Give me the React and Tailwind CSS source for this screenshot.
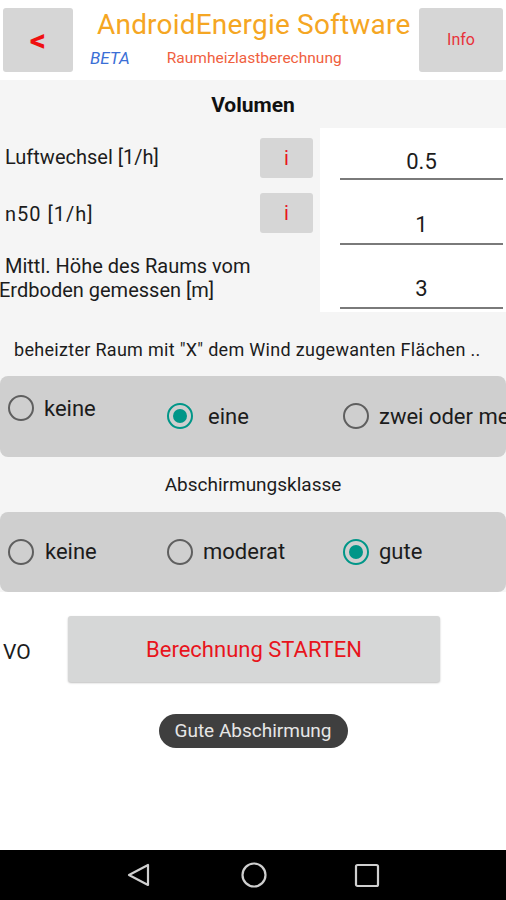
import React from "react";

function Radio({ checked }) {
  return (
    <span
      className={
        "flex h-[26px] w-[26px] shrink-0 items-center justify-center rounded-full border-[2.5px] " +
        (checked ? "border-[#009688]" : "border-[#5f5f5f]")
      }
    >
      {checked ? <span className="h-[14px] w-[14px] rounded-full bg-[#009688]" /> : null}
    </span>
  );
}

function RadioItem({ checked, label, w, pl, gap, dy }) {
  return (
    <div className={"flex items-center overflow-hidden " + w + " " + pl + " " + gap + " " + dy}>
      <Radio checked={checked} />
      <span className="whitespace-nowrap text-[22px] text-[#1c1c1c]">{label}</span>
    </div>
  );
}

export default function App() {
  return (
    <div
      className="flex h-[900px] w-[506px] flex-col overflow-hidden bg-white"
      style={{ fontFamily: "Roboto, 'Noto Sans', sans-serif" }}
    >
      {/* Header */}
      <div className="flex h-[80px] shrink-0 bg-white pt-[8px]">
        <div className="ml-[3px] flex h-[64px] w-[70px] items-center justify-center rounded-[3px] bg-[#d6d6d6]">
          <span className="text-[32px] font-bold leading-none text-[#f01010]">&lt;</span>
        </div>
        <div className="flex flex-1 flex-col">
          <div className="pl-[24px] text-[28px] tracking-[0.2px] leading-[34px] text-[#f5a623]">AndroidEnergie Software</div>
          <div className="mt-[4px] flex items-center">
            <span className="pl-[17px] text-[17px] italic text-[#3b6fd6]">BETA</span>
            <span className="pl-[37px] text-[15.5px] text-[#f0603e]">Raumheizlastberechnung</span>
          </div>
        </div>
        <div className="mr-[3px] flex h-[64px] w-[84px] items-center justify-center rounded-[3px] bg-[#d6d6d6]">
          <span className="text-[16px] text-[#e8323a]">Info</span>
        </div>
      </div>

      {/* Volumen */}
      <div className="flex h-[48px] shrink-0 items-center justify-center bg-[#f5f5f5] pt-[4px]">
        <span className="text-[21px] font-bold text-[#111]">Volumen</span>
      </div>

      {/* Rows */}
      <div className="flex h-[184px] shrink-0">
        <div className="flex w-[320px] flex-col bg-[#f5f5f5]">
          <div className="flex h-[56px] items-start pt-[10px]">
            <span className="w-[260px] pl-[5px] pt-[4px] text-[20px] text-[#1c1c1c]">Luftwechsel [1/h]</span>
            <div className="flex h-[40px] w-[53px] items-center justify-center rounded-[3px] bg-[#d6d6d6]">
              <span className="text-[20px] text-[#e8141c]">i</span>
            </div>
          </div>
          <div className="flex h-[64px] items-start pt-[9px]">
            <span className="w-[260px] pl-[5px] pt-[6px] text-[20px] tracking-[1px] text-[#1c1c1c]">n50 [1/h]</span>
            <div className="flex h-[40px] w-[53px] items-center justify-center rounded-[3px] bg-[#d6d6d6]">
              <span className="text-[20px] text-[#e8141c]">i</span>
            </div>
          </div>
          <div className="flex h-[64px] flex-col justify-center pb-[5px] text-[20px] leading-[24px] text-[#1c1c1c]">
            <span className="pl-[5px] whitespace-nowrap">Mittl. Höhe des Raums vom</span>
            <span className="-ml-[1px] whitespace-nowrap">Erdboden gemessen [m]</span>
          </div>
        </div>
        <div className="flex flex-1 flex-col bg-white pl-[20px] pr-[3px]">
          <div className="flex h-[56px] flex-col justify-end pb-[4px]">
            <div className="flex h-[36px] items-center justify-center border-b-[2px] border-[#7a7a7a] text-[22px] text-[#1c1c1c]">0.5</div>
          </div>
          <div className="flex h-[64px] flex-col justify-end pb-[3px]">
            <div className="flex h-[40px] items-center justify-center border-b-[2px] border-[#7a7a7a] text-[22px] text-[#1c1c1c]">1</div>
          </div>
          <div className="flex h-[64px] flex-col justify-end pb-[3px]">
            <div className="flex h-[40px] items-center justify-center border-b-[2px] border-[#7a7a7a] text-[22px] text-[#1c1c1c]">3</div>
          </div>
        </div>
      </div>

      {/* Wind section */}
      <div className="flex h-[64px] shrink-0 items-center bg-[#f5f5f5] pl-[14px] pt-[10px]">
        <span className="whitespace-nowrap text-[18px] tracking-[0.3px] text-[#1c1c1c]">beheizter Raum mit "X" dem Wind zugewanten Flächen ..</span>
      </div>
      <div className="flex h-[81px] shrink-0 bg-[#f5f5f5]">
        <div className="flex flex-1 overflow-hidden rounded-[8px] bg-[#cfcfcf] pt-[19px]">
          <RadioItem checked={false} label="keine" w="w-[154px]" pl="pl-[8px]" gap="gap-[10px]" dy="h-[26px]" />
          <RadioItem checked={true} label="eine" w="w-[189px]" pl="pl-[13px]" gap="gap-[15px]" dy="h-[26px] mt-[8px]" />
          <RadioItem checked={false} label="zwei oder mehr" w="flex-1" pl="pl-0" gap="gap-[10px]" dy="h-[30px] mt-[6px]" />
        </div>
      </div>

      {/* Abschirmungsklasse */}
      <div className="flex h-[55px] shrink-0 items-center justify-center bg-[#f5f5f5] pt-[2px]">
        <span className="text-[19px] text-[#1c1c1c]">Abschirmungsklasse</span>
      </div>
      <div className="flex h-[80px] shrink-0 bg-[#f5f5f5]">
        <div className="flex flex-1 items-center rounded-[8px] bg-[#cfcfcf] pb-[1px]">
          <RadioItem checked={false} label="keine" w="w-[154px]" pl="pl-[8px]" gap="gap-[11px]" dy="h-[30px]" />
          <RadioItem checked={false} label="moderat" w="w-[189px]" pl="pl-[13px]" gap="gap-[10px]" dy="h-[30px]" />
          <RadioItem checked={true} label="gute" w="flex-1" pl="pl-0" gap="gap-[10px]" dy="h-[30px]" />
        </div>
      </div>

      {/* Bottom */}
      <div className="flex flex-1 flex-col bg-white">
        <div className="mt-[24px] flex items-center">
          <span className="w-[68px] pl-[3px] pt-[8px] text-[21px] text-[#1c1c1c]">VO</span>
          <div className="flex h-[66px] w-[372px] items-center justify-center rounded-[3px] bg-[#d6d7d7] shadow-[0_1px_2px_rgba(0,0,0,0.25)]">
            <span className="text-[22px] text-[#e8141c]">Berechnung STARTEN</span>
          </div>
        </div>
        <div className="mt-[32px] flex justify-center">
          <div className="flex h-[34px] w-[189px] items-center justify-center rounded-full bg-[#3f3f3f]">
            <span className="text-[19px] text-[#e6e6e6]">Gute Abschirmung</span>
          </div>
        </div>
      </div>

      {/* Nav bar */}
      <div className="flex h-[50px] shrink-0 items-center justify-center gap-[86px] bg-black">
        <svg width="26" height="26" viewBox="0 0 26 26" className="mr-[2px]">
          <path d="M22 3 L22 23 L3 13 Z" fill="none" stroke="#cfcfcf" strokeWidth="2.2" strokeLinejoin="round" />
        </svg>
        <svg width="28" height="28" viewBox="0 0 28 28">
          <circle cx="14" cy="14" r="11.5" fill="none" stroke="#cfcfcf" strokeWidth="2.2" />
        </svg>
        <svg width="26" height="26" viewBox="0 0 26 26">
          <rect x="2" y="3" width="22" height="21" rx="1.5" fill="none" stroke="#cfcfcf" strokeWidth="2.2" />
        </svg>
      </div>
    </div>
  );
}
